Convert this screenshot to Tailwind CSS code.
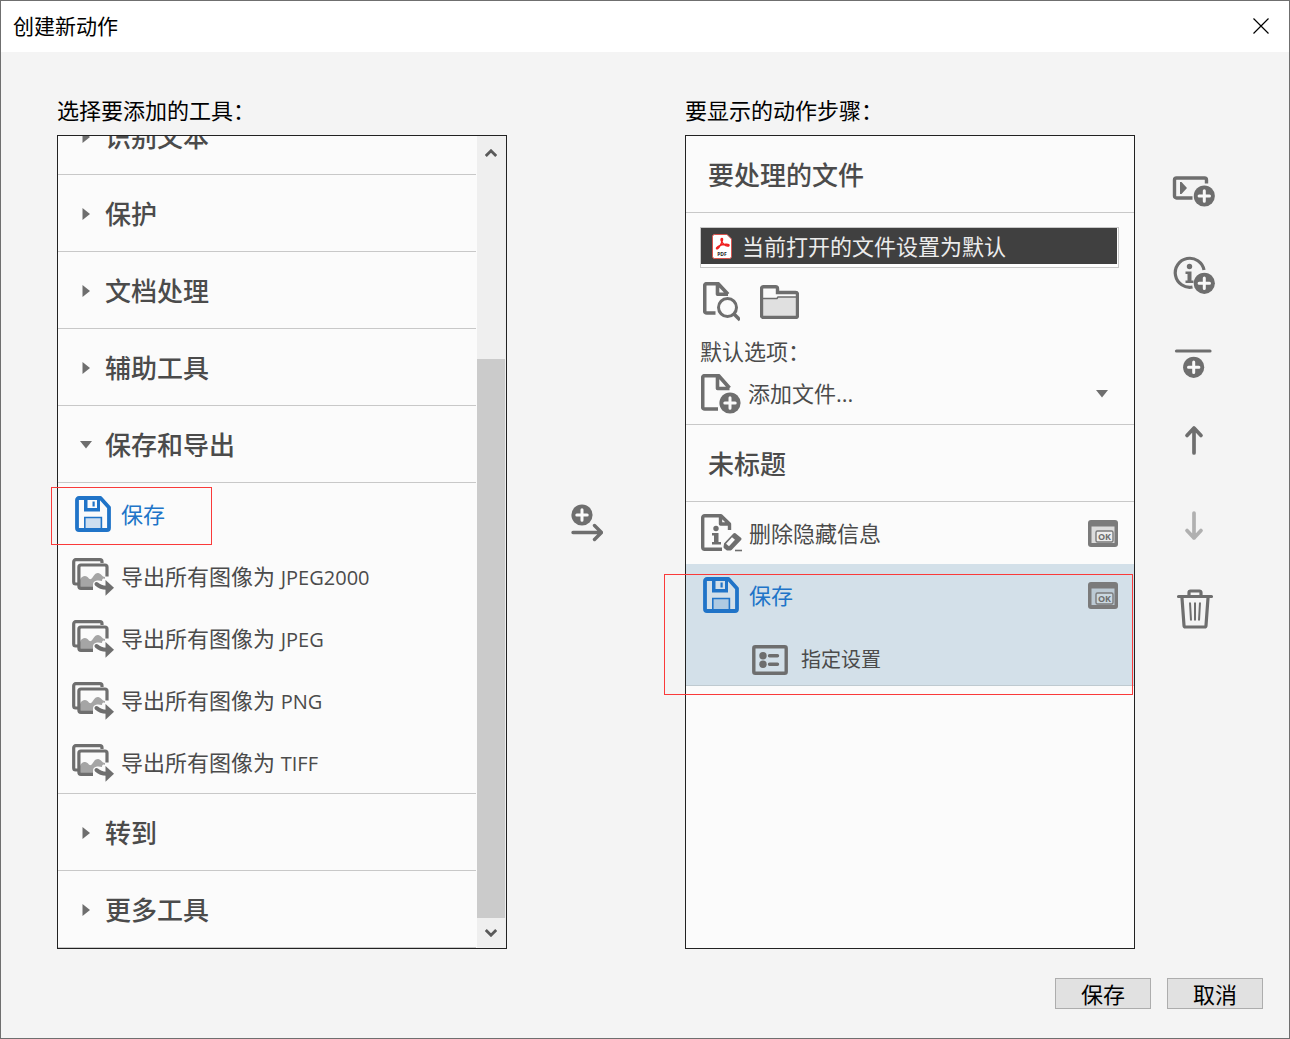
<!DOCTYPE html>
<html lang="zh-CN">
<head>
<meta charset="utf-8">
<title>创建新动作</title>
<script src="https://cdn.jsdelivr.net/npm/@tailwindcss/browser@4"></script>
</head>
<body class="bg-[#f4f4f4] font-['Open_Sans','Noto_Sans_CJK_SC',sans-serif] text-[22px] leading-8 text-[#4b4b4b]">
<svg class="hidden" aria-hidden="true">
  <symbol id="plus" viewBox="0 0 22 22">
    <circle cx="11" cy="11" r="10.600" fill="#6e6e6e"/>
    <path d="M11 5.800v10.400M5.800 11h10.400" stroke="#fafafa" stroke-width="3" stroke-linecap="round"/>
  </symbol>
  <symbol id="save" viewBox="0 0 36 36">
    <path d="M4 2h21.500l8.500 9.500V32a2 2 0 0 1-2 2H4a2 2 0 0 1-2-2V4a2 2 0 0 1 2-2z" fill="none" stroke="#2074c8" stroke-width="3.800" stroke-linejoin="round"/>
    <path d="M9 2v13.500h16V2h-3v10h-9.500V2z" fill="#2074c8"/>
    <path d="M17.500 5.500h2.200v5h-2.200z" fill="#2074c8"/>
    <path d="M9.800 33V21.500h16.600V33" fill="#2074c8" fill-opacity=".2" stroke="#2074c8" stroke-width="1.600"/>
  </symbol>
  <symbol id="export" viewBox="0 0 42 38">
    <path d="M6 26H3.700a2 2 0 0 1-2-2V3.700a2 2 0 0 1 2-2H28a2 2 0 0 1 2 2V5" fill="none" stroke="#6e6e6e" stroke-width="3.200"/>
    <path d="M8 30V22c1-3 3-4 5-4 3 0 4 4 6 3s3-6 7-6c3 0 4 4 7 4v2c-2-1-3 0-3 2-4-1-9-1-9 4v3z" fill="#a5a5a5"/>
    <path d="M21 30.300H8.900a2 2 0 0 1-2-2V9a2 2 0 0 1 2-2H33a2 2 0 0 1 2 2v9.500" fill="none" stroke="#6e6e6e" stroke-width="3.200"/>
    <path d="M24.500 26c3 3 6 3.700 10 3.700" fill="none" stroke="#6e6e6e" stroke-width="4" stroke-linecap="round"/>
    <path d="M33.500 22 42 29.700l-8.500 8z" fill="#6e6e6e"/>
  </symbol>
  <symbol id="ok" viewBox="0 0 30 27">
    <rect width="30" height="27" rx="3" fill="#7b7b7b"/>
    <path d="M3.500 6.500h23V23h-23z" fill="#dcdcdc"/>
    <rect x="8" y="11" width="17" height="11" rx="1.500" fill="#ececec" stroke="#7b7b7b" stroke-width="1.400"/>
    <text x="16.500" y="20" text-anchor="middle" font-size="9" font-weight="700" fill="#6e6e6e" font-family="Open Sans, sans-serif">OK</text>
  </symbol>
  <symbol id="ok-selected" viewBox="0 0 30 27">
    <rect width="30" height="27" rx="3" fill="#7b7b7b"/>
    <path d="M3.500 6.500h23V23h-23z" fill="#bccad4"/>
    <rect x="8" y="11" width="17" height="11" rx="1.500" fill="#cbd8e0" stroke="#7b7b7b" stroke-width="1.400"/>
    <text x="16.500" y="20" text-anchor="middle" font-size="9" font-weight="700" fill="#6e6e6e" font-family="Open Sans, sans-serif">OK</text>
  </symbol>
  <symbol id="closed" viewBox="0 0 8 12"><path d="M.5 0l7.500 6-7.500 6z" fill="#6e6e6e"/></symbol>
  <symbol id="opened" viewBox="0 0 12 8"><path d="M0 0h12L6 7.500z" fill="#6e6e6e"/></symbol>
</svg>

<div class="flex min-h-screen flex-col border border-[#6f6f6f]">
  <header class="flex h-[51px] shrink-0 items-center justify-between bg-white pb-px pl-3 pr-5 text-black">
    <h1 class="text-[21px]">创建新动作</h1>
    <button aria-label="关闭"><svg class="block size-4" viewBox="0 0 16 16"><path d="M.5.5l15 15M15.500.5l-15 15" stroke="#000" stroke-width="1.200"/></svg></button>
  </header>

  <main class="flex grow pl-14 pt-[42px]">
    <section class="flex min-w-0 flex-1 flex-col">
      <h2 class="h-[41px] text-black">选择要添加的工具：</h2>
      <div class="relative flex grow flex-col">
        <div class="flex h-[814px] grow border border-[#222] bg-[#fbfbfb]">
          <div class="flex min-w-0 flex-1 flex-col justify-end overflow-hidden">
            <button class="flex h-[77px] shrink-0 items-center border-b border-[#c8c8c8] pl-6 pt-0.5 text-left text-[26px] font-medium"><svg class="mr-[15px] h-3 w-2"><use href="#closed"/></svg>识别文本</button>
            <button class="flex h-[77px] shrink-0 items-center border-b border-[#c8c8c8] pl-6 pt-0.5 text-left text-[26px] font-medium"><svg class="mr-[15px] h-3 w-2"><use href="#closed"/></svg>保护</button>
            <button class="flex h-[77px] shrink-0 items-center border-b border-[#c8c8c8] pl-6 pt-0.5 text-left text-[26px] font-medium"><svg class="mr-[15px] h-3 w-2"><use href="#closed"/></svg>文档处理</button>
            <button class="flex h-[77px] shrink-0 items-center border-b border-[#c8c8c8] pl-6 pt-0.5 text-left text-[26px] font-medium"><svg class="mr-[15px] h-3 w-2"><use href="#closed"/></svg>辅助工具</button>
            <button class="flex h-[77px] shrink-0 items-center border-b border-[#c8c8c8] pl-[22px] pt-0.5 text-left text-[26px] font-medium" aria-expanded="true"><svg class="mr-[13px] h-2 w-3"><use href="#opened"/></svg>保存和导出</button>
            <ul class="shrink-0 border-b border-[#c8c8c8]">
              <li class="flex h-[62px] items-center pl-[17px] text-[#2074c8]"><svg class="mr-[10px] size-9"><use href="#save"/></svg>保存</li>
              <li class="flex h-[62px] items-center pl-[14px]"><svg class="mr-[7px] mt-0.5 h-[38px] w-[42px]"><use href="#export"/></svg><span>导出所有图像为 <span class="text-xl">JPEG2000</span></span></li>
              <li class="flex h-[62px] items-center pl-[14px]"><svg class="mr-[7px] mt-0.5 h-[38px] w-[42px]"><use href="#export"/></svg><span>导出所有图像为 <span class="text-xl">JPEG</span></span></li>
              <li class="flex h-[62px] items-center pl-[14px]"><svg class="mr-[7px] mt-0.5 h-[38px] w-[42px]"><use href="#export"/></svg><span>导出所有图像为 <span class="text-xl">PNG</span></span></li>
              <li class="flex h-[62px] items-center pl-[14px]"><svg class="mr-[7px] mt-0.5 h-[38px] w-[42px]"><use href="#export"/></svg><span>导出所有图像为 <span class="text-xl">TIFF</span></span></li>
            </ul>
            <button class="flex h-[77px] shrink-0 items-center border-b border-[#c8c8c8] pl-6 pt-0.5 text-left text-[26px] font-medium"><svg class="mr-[15px] h-3 w-2"><use href="#closed"/></svg>转到</button>
            <button class="flex h-[77px] shrink-0 items-center border-b border-[#c8c8c8] pl-6 pt-0.5 text-left text-[26px] font-medium"><svg class="mr-[15px] h-3 w-2"><use href="#closed"/></svg>更多工具</button>
          </div>
          <div class="ml-px flex w-[29px] flex-col bg-[#efefef] pr-px">
            <button aria-label="向上滚动" class="flex h-[34px] items-center justify-center"><svg class="h-2 w-3" viewBox="0 0 12 8" fill="none"><path d="M.8 7L6 1.800 11.200 7" stroke="#5a5a5a" stroke-width="2.800"/></svg></button>
            <div class="grow-[189]"></div>
            <div class="grow-[559] bg-[#cbcbcb]"></div>
            <button aria-label="向下滚动" class="flex h-[30px] items-center justify-center"><svg class="h-2 w-3" viewBox="0 0 12 8" fill="none"><path d="M.8 1L6 6.200 11.200 1" stroke="#5a5a5a" stroke-width="2.800"/></svg></button>
          </div>
        </div>
        <div class="pointer-events-none absolute -left-[6px] top-[352px] h-[58px] w-[161px] border border-[#fa3a3a]"></div>
      </div>
    </section>

    <div class="w-[178px] shrink-0 pl-16 pt-[410px]">
      <button aria-label="添加到右侧" class="block"><svg class="h-[38px] w-8" viewBox="0 0 32 38" fill="none"><use href="#plus" width="22" height="22"/><path d="M2 28.500h28M23.500 21.500l7 7-7 7" stroke="#6e6e6e" stroke-width="3.400" stroke-linecap="round" stroke-linejoin="round"/></svg></button>
    </div>

    <section class="flex min-w-0 flex-1 flex-col">
      <h2 class="h-[41px] text-black">要显示的动作步骤：</h2>
      <div class="relative flex grow flex-col">
        <div class="flex grow flex-col border border-[#222] bg-[#fbfbfb]">
          <h3 class="flex h-[77px] items-center border-b border-[#c8c8c8] pl-[22px] pt-0.5 text-[26px] font-medium">要处理的文件</h3>
          <div class="border-b border-[#c8c8c8] px-[14px] pb-[10px] pt-[14px]">
            <div class="mr-px border border-[#c8c8c8] bg-white pb-[3px] pr-px">
              <div class="flex h-9 items-center bg-[#404040] pl-[11px] text-[#ececec]">
                <svg class="mr-[10px] h-[25px] w-5" viewBox="0 0 20 25" fill="none"><path d="M2.500.5H15L19.500 5v17.500a2 2 0 0 1-2 2h-15a2 2 0 0 1-2-2v-20a2 2 0 0 1 2-2z" fill="#fff" stroke="#d8544e"/><path d="M10 4.500c-2 0-.5 4 2 6s5 2 5 .8-4-1.500-7-.5-6 2.500-5.500 3.700c1 1.200 3-1.500 4.500-4.500s2-5.500 1-5.500z" stroke="#f02222" stroke-width="1.500"/><text x="10" y="22" text-anchor="middle" font-family="Open Sans, sans-serif" font-size="5" font-weight="700" fill="#222">PDF</text></svg>
                当前打开的文件设置为默认
              </div>
            </div>
            <div class="flex items-center gap-5 pl-[3px] pt-[14px]">
              <button aria-label="选择文件"><svg class="block h-10 w-[37px]" viewBox="0 0 37 40" fill="none" stroke="#6e6e6e" stroke-width="3.600" stroke-linejoin="round"><path d="M12.500 31H3.700a2 2 0 0 1-2-2V3.700a2 2 0 0 1 2-2h11.500L25 12.300M14.500 2v10.300H25"/><circle cx="24.500" cy="25.500" r="9" stroke-width="3"/><path d="M31 32l6 6"/></svg></button>
              <button aria-label="选择文件夹"><svg class="block h-[34px] w-[39px]" viewBox="0 0 39 34" fill="none" stroke="#6e6e6e"><path d="M3 14h14l2-2h18v20H3z" fill="#e0e0e0" stroke="none"/><path d="M3.500 1.700h12a2 2 0 0 1 2 2v3.800h18a2 2 0 0 1 2 2v21a2 2 0 0 1-2 2h-32a2 2 0 0 1-2-2V3.700a2 2 0 0 1 2-2z" stroke-width="3.400"/><path d="M3 13.500h14l1-1.500h18" stroke-width="1.500"/></svg></button>
            </div>
            <label for="default-option" class="mt-[13px] block">默认选项：</label>
            <div class="mt-[7px] flex items-center pl-px pr-3">
              <svg class="h-10 w-10 shrink-0" viewBox="0 0 40 40" fill="none"><path d="M17 35H3.700a2 2 0 0 1-2-2V3.700a2 2 0 0 1 2-2h14L28.500 14M16.500 2v12.500h12" stroke="#6e6e6e" stroke-width="3.600" stroke-linejoin="round"/><use href="#plus" x="18" y="18" width="22" height="22"/></svg>
              <select id="default-option" class="ml-[7px] h-9 min-w-0 grow appearance-none bg-transparent pb-0.5"><option>添加文件...</option></select>
              <svg class="h-2 w-3 shrink-0"><use href="#opened"/></svg>
            </div>
          </div>
          <h3 class="flex h-[77px] items-center border-b border-[#c8c8c8] pl-[22px] pt-0.5 text-[26px] font-medium">未标题</h3>
          <div class="flex h-[62px] items-center pl-[15px] pr-4">
            <svg class="mr-[6px] h-[38px] w-[42px]" viewBox="0 0 42 38" fill="none"><path d="M21 35.300H3.700a2 2 0 0 1-2-2V3.700a2 2 0 0 1 2-2H20L28.500 10v6M19.500 3v7h8" stroke="#6e6e6e" stroke-width="3.400" stroke-linejoin="round"/><circle cx="15" cy="14.500" r="2.700" fill="#6e6e6e"/><path d="M11 19h6.500v9H20v2.500h-9V28h2v-6.500h-2z" fill="#6e6e6e"/><path d="M24.500 30l9-9.500 5.500 4.500-9.500 10h-3l-2.500-2z" fill="#6e6e6e" stroke="#6e6e6e" stroke-width="3" stroke-linejoin="round"/><path d="M26.500 31l6-6.500" stroke="#fbfbfb" stroke-width="4"/><path d="M34 36.500h7" stroke="#6e6e6e" stroke-width="1.600"/></svg>
            <span class="grow">删除隐藏信息</span>
            <svg class="h-[27px] w-[30px]"><use href="#ok"/></svg>
          </div>
          <div class="border-b border-[#bfcad0] bg-[#d3e0e9]">
            <div class="flex h-[62px] items-center pl-[17px] pr-4 text-[#2074c8]">
              <svg class="mr-[10px] size-9"><use href="#save"/></svg>
              <span class="grow">保存</span>
              <svg class="h-[27px] w-[30px]"><use href="#ok-selected"/></svg>
            </div>
            <button class="flex h-[59px] items-center pl-[66px] pt-2 text-xl">
              <svg class="mr-[13px] h-[30px] w-9" viewBox="0 0 36 30" fill="none"><rect x="1.800" y="1.800" width="32.400" height="26.400" rx="1.500" stroke="#6e6e6e" stroke-width="3.400"/><circle cx="11" cy="10.700" r="3.700" fill="#6e6e6e"/><circle cx="11" cy="19.300" r="3.700" fill="#6e6e6e"/><path d="M17.500 10.700h8M17.500 19.300h8" stroke="#6e6e6e" stroke-width="3.400" stroke-linecap="round"/></svg>
              指定设置
            </button>
          </div>
        </div>
        <div class="pointer-events-none absolute -left-[21px] right-0.5 top-[439px] h-[121px] border border-[#fa3a3a]"></div>
      </div>
    </section>

    <div class="flex w-[154px] shrink-0 flex-col items-center gap-9 pr-9 pt-[73px]">
      <button aria-label="添加步骤"><svg class="block size-12" viewBox="0 0 48 48" fill="none"><path d="M22.500 31H6.500a2 2 0 0 1-2-2V13a2 2 0 0 1 2-2H34.500a2 2 0 0 1 2 2v3.500" stroke="#6e6e6e" stroke-width="3.400"/><path d="M10 15l1.500 0L17 21l-5.500 6H10z" fill="#6e6e6e"/><use href="#plus" x="23.300" y="18" width="22" height="22"/></svg></button>
      <button aria-label="添加说明"><svg class="block size-12" viewBox="0 0 48 48" fill="none"><path d="M22.500 36a14.500 14.500 0 1 1 11.500-17" stroke="#6e6e6e" stroke-width="3.200"/><circle cx="19.500" cy="15.500" r="2.700" fill="#6e6e6e"/><path d="M15.500 20.500h6v9h2V32h-8v-2.500h2V23h-2z" fill="#6e6e6e"/><use href="#plus" x="23.300" y="21.300" width="22" height="22"/></svg></button>
      <button aria-label="添加分隔"><svg class="block size-12" viewBox="0 0 48 48" fill="none"><path d="M6.500 16h33.500" stroke="#6e6e6e" stroke-width="3.200" stroke-linecap="round"/><use href="#plus" x="12.700" y="21.300" width="22" height="22"/></svg></button>
      <button aria-label="上移"><svg class="block size-12" viewBox="0 0 48 48" fill="none"><path d="M24 9v25M17 16.500l7-7.500 7 7.500" stroke="#6e6e6e" stroke-width="3.700" stroke-linecap="round" stroke-linejoin="round"/></svg></button>
      <button aria-label="下移" disabled><svg class="block size-12" viewBox="0 0 48 48" fill="none"><path d="M24 10v25M17 27.500l7 7.500 7-7.500" stroke="#b0b0b0" stroke-width="3.700" stroke-linecap="round" stroke-linejoin="round"/></svg></button>
      <button aria-label="删除"><svg class="block size-12" viewBox="0 0 48 48" fill="none" stroke="#6e6e6e"><path d="M8.500 9.500h33M19 9V5.500a1.500 1.500 0 0 1 1.500-1.500h9A1.500 1.500 0 0 1 31 5.500V9M12 11l2 27.500a1.500 1.500 0 0 0 1.500 1.500h19a1.500 1.500 0 0 0 1.500-1.500L38 11" stroke-width="3.200" stroke-linecap="round"/><path d="M20 15.500l1 18M25 15.500v18M30 15.500l-1 18" stroke-width="2"/></svg></button>
    </div>
  </main>

  <footer class="flex shrink-0 justify-end gap-4 px-[26px] py-[29px] text-black">
    <button class="h-[31px] w-24 border border-[#adadad] bg-[#e1e1e1] leading-7">保存</button>
    <button class="h-[31px] w-24 border border-[#adadad] bg-[#e1e1e1] leading-7">取消</button>
  </footer>
</div>
</body>
</html>
